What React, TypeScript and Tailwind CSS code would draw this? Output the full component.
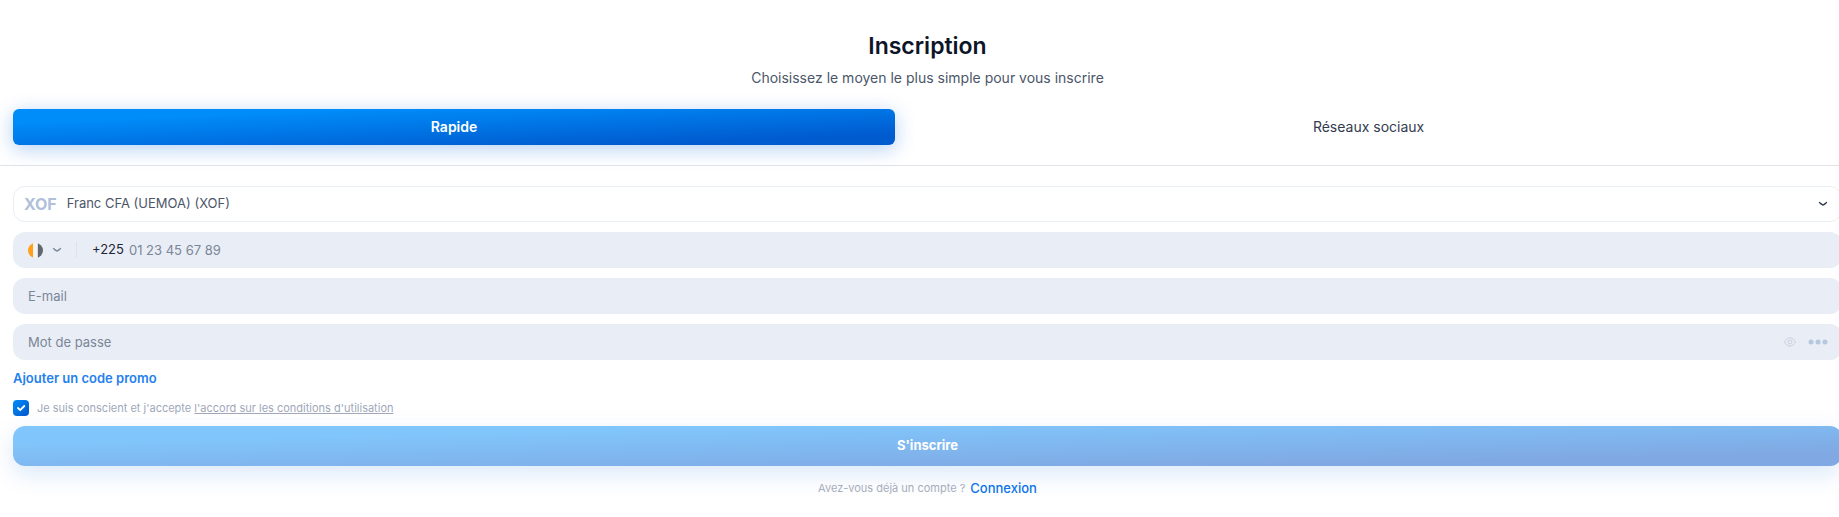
import { useState } from "react";

const field =
  "flex h-9 items-center rounded-xl bg-[#e9edf5] text-[13px] text-[#7b8698]";

function Chevron() {
  return (
    <svg width="10" height="6" viewBox="0 0 10 6" fill="none" aria-hidden="true">
      <path d="M1.500 1.500C3 2.800 4 4 5 4S7 2.800 8.500 1.500" stroke="currentColor" strokeWidth="1.400" strokeLinecap="round" />
    </svg>
  );
}

function Flag() {
  return (
    <svg width="15" height="15" viewBox="0 0 16 16" aria-hidden="true">
      <clipPath id="flag-circle">
        <circle cx="8" cy="8" r="8" />
      </clipPath>
      <g clipPath="url(#flag-circle)">
        <path fill="#ff9f1c" d="M0 0h5.500v16H0z" />
        <path fill="#f3f4f5" d="M5.500 0h5v16h-5z" />
        <path fill="#5f686d" d="M10.500 0H16v16h-5.500z" />
      </g>
    </svg>
  );
}

export default function App() {
  const [accepted, setAccepted] = useState(true);
  return (
    <div className="overflow-x-hidden bg-white font-['Inter',sans-serif]">
      <main className="-mr-4 pb-5">
        <header className="px-[13px] pt-7 text-center">
          <h1 className="text-[23px] leading-9 font-semibold text-[#0e1528]">Inscription</h1>
          <p className="mt-1 text-sm leading-5 text-[#4b5669]">
            Choisissez le moyen le plus simple pour vous inscrire
          </p>
        </header>

        <nav className="mt-[21px] flex border-b border-[#e2e4ea] px-[13px] pb-5 text-sm">
          <button
            type="button"
            className="h-9 flex-auto rounded-md bg-[linear-gradient(to_bottom_right,#008cf9_20%,#005bcf_85%)] font-semibold text-white shadow-[0_4px_20px_rgba(0,100,220,0.3)]"
          >
            Rapide
          </button>
          <button type="button" className="h-9 flex-auto text-[#333c4f]">
            Réseaux sociaux
          </button>
        </nav>

        <form className="px-[13px] pt-5" onSubmit={(e) => e.preventDefault()}>
          <div className="flex flex-col gap-[10px]">
            <div className="flex h-9 items-center rounded-xl border border-[#e9edf5] pr-[13px] pl-[10px] text-[13px] text-[#4b5669]">
              <label htmlFor="currency" className="text-base font-bold text-[#b0bfda]">
                XOF
              </label>
              <select id="currency" className="ml-[10px] h-full min-w-0 flex-1 appearance-none bg-transparent outline-none">
                <option>Franc CFA (UEMOA) (XOF)</option>
              </select>
              <span className="text-[#333c4f]">
                <Chevron />
              </span>
            </div>

            <div className={field}>
              <button type="button" aria-label="Indicatif" className="flex items-center gap-[9px] pl-[15px]">
                <Flag />
                <Chevron />
              </button>
              <span className="ml-[14px] h-4 w-px bg-[#dbe3ee]" />
              <label htmlFor="phone" className="ml-[15px] text-[#1f2738]">
                +225
              </label>
              <input
                id="phone"
                type="tel"
                placeholder="01 23 45 67 89"
                className="ml-[5px] h-full min-w-0 flex-1 bg-transparent outline-none placeholder:text-[#7b8698]"
              />
            </div>

            <div className={field}>
              <input
                type="email"
                aria-label="E-mail"
                placeholder="E-mail"
                className="h-full min-w-0 flex-1 bg-transparent px-[15px] outline-none placeholder:text-[#7b8698]"
              />
            </div>

            <div className={field}>
              <input
                type="password"
                aria-label="Mot de passe"
                placeholder="Mot de passe"
                className="h-full min-w-0 flex-1 bg-transparent px-[15px] outline-none placeholder:text-[#7b8698]"
              />
              <button type="button" aria-label="Afficher" className="text-[#c9d2e0]">
                <svg width="12" height="10" viewBox="0 0 12 10" fill="none" stroke="currentColor" strokeWidth="1">
                  <path d="M.6 5C1.700 2.300 3.600.9 6 .9S10.300 2.300 11.400 5C10.300 7.700 8.400 9.100 6 9.100S1.700 7.700.6 5Z" />
                  <circle cx="6" cy="5" r="2" />
                </svg>
              </button>
              <button type="button" aria-label="Options" className="mr-[14px] ml-3 text-[#b5c8e0]">
                <svg width="20" height="6" viewBox="0 0 20 6" fill="currentColor">
                  <circle cx="3" cy="3" r="2.500" />
                  <circle cx="10" cy="3" r="2.500" />
                  <circle cx="17" cy="3" r="2.500" />
                </svg>
              </button>
            </div>
          </div>

          <button type="button" className="mt-2 block text-[13px] leading-5 font-semibold text-[#2580ed]">
            Ajouter un code promo
          </button>

          <div className="mt-3 flex h-4 items-center gap-2 text-[11px] leading-4 text-[#a0a8ba]">
            <span className="grid size-4">
              <input
                id="terms"
                type="checkbox"
                checked={accepted}
                onChange={(e) => setAccepted(e.target.checked)}
                className="peer col-start-1 row-start-1 size-4 appearance-none rounded border border-[#b0bfda] checked:border-0 checked:bg-[linear-gradient(135deg,#008dfa,#0057cb)]"
              />
              <svg
                viewBox="0 0 16 16"
                fill="none"
                aria-hidden="true"
                className="pointer-events-none invisible col-start-1 row-start-1 size-4 peer-checked:visible"
              >
                <path d="m5 8 2.200 2.200L11.300 6" stroke="#fff" strokeWidth="1.800" strokeLinecap="round" strokeLinejoin="round" />
              </svg>
            </span>
            <p>
              <label htmlFor="terms">Je suis conscient et j'accepte </label>
              <a href="#conditions" className="underline">
                l'accord sur les conditions d'utilisation
              </a>
            </p>
          </div>

          <button
            type="submit"
            className="mt-[10px] h-10 w-full rounded-xl bg-[linear-gradient(to_bottom_right,#80c6fc_20%,#80a8e2_85%)] text-[13px] font-bold text-white shadow-[0_8px_24px_rgba(0,100,220,0.15)]"
          >
            S'inscrire
          </button>
        </form>

        <p className="mt-3 flex items-center justify-center gap-[5px] text-[11px] leading-5 text-[#a6adbd]">
          Avez-vous déjà un compte ?
          <a href="#connexion" className="text-[13px] font-medium text-[#0b74e8]">
            Connexion
          </a>
        </p>
      </main>
    </div>
  );
}
